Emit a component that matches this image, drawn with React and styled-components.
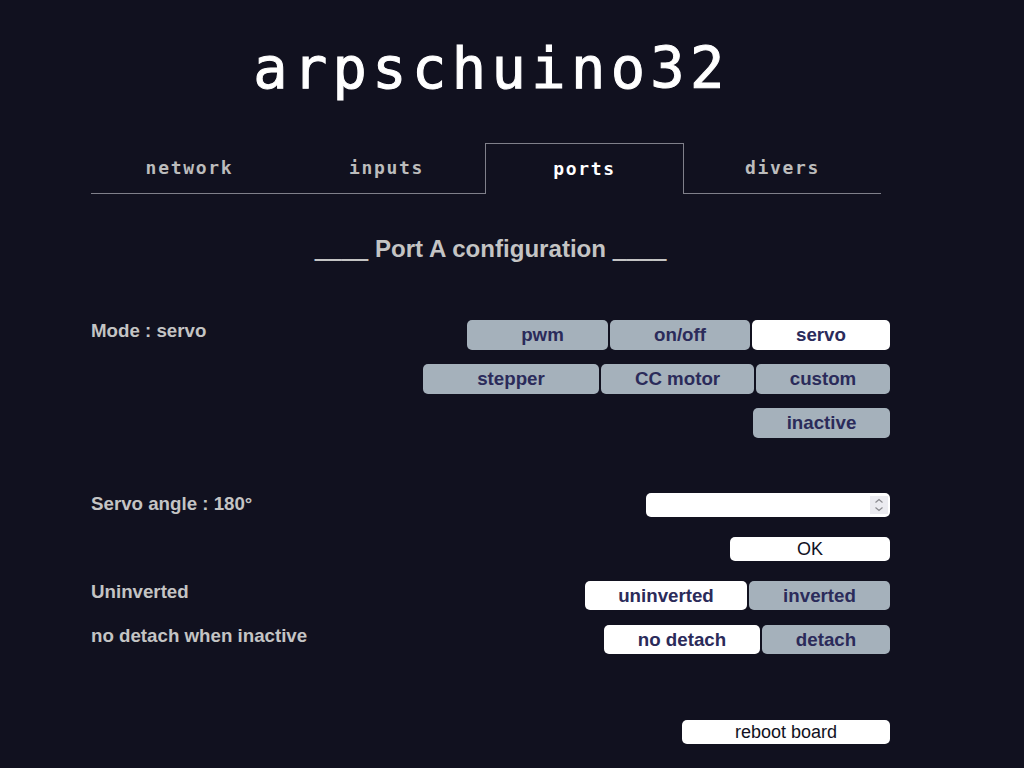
import React from "react";
import styled, {createGlobalStyle} from 'styled-components'

const GlobalStyle = createGlobalStyle`
    html, body {
        margin: 0;
        background: #11111f;
    }
`;

const tabs = ['network', 'inputs', 'ports', 'divers'];

const modeRows = [
    [['pwm', 141, 10], ['on/off', 140], ['servo', 138, 0, true]],
    [['stepper', 176], ['CC motor', 153], ['custom', 134]],
    [['inactive', 137]],
];

function OptionGroup({options}){
    return (
        <ButtonLine>
            {options.map(([label, width, inset, active]) => (
                <OptionButton key={label} $width={width} $inset={inset} $active={active}>{label}</OptionButton>
            ))}
        </ButtonLine>
    )
}

export default function App(){
    return (
        <Page>
            <GlobalStyle />
            <Title>arpschuino32</Title>
            <TabBar>
                {tabs.map(tab => (
                    <Tab key={tab} $active={tab === 'ports'}>{tab}</Tab>
                ))}
            </TabBar>
            <Heading><Dash>____</Dash> Port A configuration <Dash>____</Dash></Heading>

            <ModeRow>
                <RowLabel>Mode : servo</RowLabel>
                <ModeButtons>
                    {modeRows.map((options, i) => <OptionGroup key={i} options={options} />)}
                </ModeButtons>
            </ModeRow>

            <AngleRow>
                <RowLabel>Servo angle : 180°</RowLabel>
                <NumberWrap>
                    <NumberField type="number" />
                    <Spinner viewBox="0 0 18 18" aria-hidden="true">
                        <path d="M5.5 6.5 9 3.5l3.5 3M5.5 11.5 9 14.5l3.5-3" fill="none" stroke="#8a8a8f" strokeWidth="1.2" />
                    </Spinner>
                </NumberWrap>
            </AngleRow>

            <OkRow>
                <PlainButton $width={160}>OK</PlainButton>
            </OkRow>

            <ToggleRow>
                <RowLabel>Uninverted</RowLabel>
                <OptionGroup options={[['uninverted', 162, 0, true], ['inverted', 141]]} />
            </ToggleRow>

            <ToggleRow $tight>
                <RowLabel>no detach when inactive</RowLabel>
                <OptionGroup options={[['no detach', 156, 0, true], ['detach', 128]]} />
            </ToggleRow>

            <RebootRow>
                <PlainButton $width={208}>reboot board</PlainButton>
            </RebootRow>
        </Page>
    )
}

const Page = styled.div`
    width: 799px;
    height: 768px;
    overflow: hidden;
    margin-left: 91px;
    font-family: "Liberation Sans", Arial, sans-serif;
    color: #c4c4c4;
`;

const Title = styled.h1`
    width: 799px;
    margin: 0;
    height: 143px;
    padding: 30px 0 0 2px;
    box-sizing: border-box;
    text-align: center;
    font-family: "DejaVu Sans Mono", monospace;
    font-size: 57px;
    line-height: 76px;
    font-weight: 400;
    letter-spacing: 5.4px;
    -webkit-text-stroke: 1px #fff;
    color: #fff;
`;

const TabBar = styled.div`
    width: 790px;
    display: grid;
    grid-template-columns: 197px 197px 199px 197px;
    height: 51px;
`;

const Tab = styled.div`
    box-sizing: border-box;
    display: flex;
    justify-content: center;
    align-items: center;
    height: 51px;
    padding-bottom: 2px;
    font-family: "DejaVu Sans Mono", monospace;
    font-size: 18px;
    font-weight: 700;
    letter-spacing: 1.7px;
    color: ${props => props.$active ? '#fff' : '#bcbcbc'};
    border-bottom: ${props => props.$active ? 'none' : '1px solid #80808a'};
    border-top: ${props => props.$active ? '1px solid #80808a' : 'none'};
    border-left: ${props => props.$active ? '1px solid #80808a' : 'none'};
    border-right: ${props => props.$active ? '1px solid #80808a' : 'none'};
`;

const Heading = styled.h2`
    width: 799px;
    margin: 41px 0 0;
    text-align: center;
    font-size: 24.1px;
    line-height: 28px;
    font-weight: 700;
    color: #c4c4c4;
`;

const Dash = styled.span`
    text-shadow: 0 1px 0 #c4c4c4;
`;

const Row = styled.div`
    display: flex;
    justify-content: space-between;
    align-items: flex-start;
`;

const ModeRow = styled(Row)`
    margin-top: 57px;
`;

const AngleRow = styled(Row)`
    margin-top: 55px;
`;

const OkRow = styled(Row)`
    justify-content: flex-end;
    margin-top: 20px;
`;

const RebootRow = styled(Row)`
    justify-content: flex-end;
    margin-top: 66px;
`;

const RowLabel = styled.div`
    font-size: 18.72px;
    line-height: 21px;
    font-weight: 700;
    color: #c4c4c4;
`;

const ModeButtons = styled.div`
    display: flex;
    flex-direction: column;
    align-items: flex-end;
    gap: 14px;
`;

const ButtonLine = styled.div`
    display: flex;
    gap: 2px;
`;

const OptionButton = styled.button`
    box-sizing: border-box;
    width: ${props => props.$width}px;
    height: 30px;
    padding: 0 0 0 ${props => props.$inset || 0}px;
    border: none;
    border-radius: 5px;
    background: ${props => props.$active ? '#fff' : '#a5b1bb'};
    color: #2b2b5a;
    font-family: inherit;
    font-size: 18.72px;
    font-weight: 700;
`;

const ToggleRow = styled(Row)`
    margin-top: ${props => props.$tight ? 15 : 20}px;
    ${OptionButton} {
        height: 29px;
    }
`;

const PlainButton = styled.button`
    box-sizing: border-box;
    width: ${props => props.$width}px;
    height: 24px;
    padding: 0;
    border: none;
    border-radius: 5px;
    background: #fff;
    color: #111122;
    font-family: inherit;
    font-size: 18px;
`;

const NumberWrap = styled.div`
    position: relative;
    width: 244px;
    height: 24px;
`;

const NumberField = styled.input`
    display: block;
    box-sizing: border-box;
    width: 100%;
    height: 24px;
    padding: 0 2px;
    border: none;
    border-radius: 5px;
    background: #fff;
    font-family: inherit;
    font-size: 18px;
    &::-webkit-inner-spin-button {
        display: none;
    }
`;

const Spinner = styled.svg`
    position: absolute;
    top: 3px;
    right: 2px;
    width: 18px;
    height: 18px;
    background: #ebebf0;
`;
